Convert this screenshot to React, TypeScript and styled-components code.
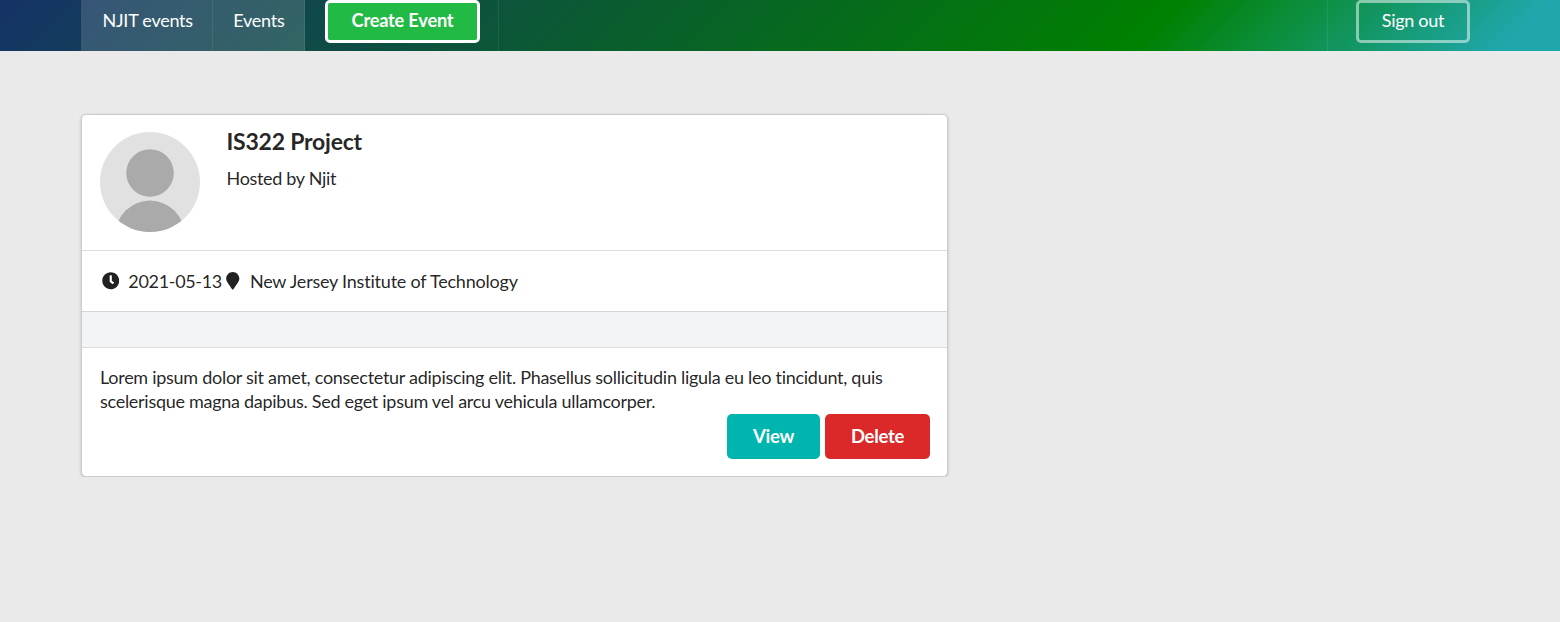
import React from "react";
import styled, { createGlobalStyle, css } from "styled-components";
import { FaClock, FaMapMarker } from "react-icons/fa";

const GlobalStyle = createGlobalStyle`
  *, *::before, *::after { box-sizing: border-box; }
  body {
    margin: 0;
    background: #eaeaea;
    color: rgba(0, 0, 0, 0.87);
    font-family: Lato, "Liberation Sans", sans-serif;
    font-size: 18px;
    font-variant-ligatures: none;
    line-height: 24px;
  }
`;

const NavBar = styled.nav`
  display: flex;
  height: 51px;
  padding: 0 70px 0 81px;
  background: linear-gradient(
    135deg,
    rgb(24, 42, 115) -98px,
    rgb(0, 128, 0) 834px,
    rgb(32, 167, 172) 1098px
  );
`;

const NavLink = styled.a<{ $width: number; $indent: number }>`
  width: ${(p) => p.$width}px;
  padding: 8px 0 0 ${(p) => p.$indent}px;
  border-right: 1px solid rgba(255, 255, 255, 0.08);
  background: rgba(255, 255, 255, 0.15);
  color: #fff;
  letter-spacing: -0.25px;
  text-decoration: none;
  white-space: nowrap;
`;

const NavSlot = styled.div<{ $end?: boolean }>`
  display: flex;
  align-items: flex-start;
  ${(p) =>
    p.$end
      ? css`
          margin-left: auto;
          padding: 0 20px 0 28px;
          border-left: 1px solid rgba(255, 255, 255, 0.08);
        `
      : css`
          width: 194px;
          padding-left: 20px;
          border-right: 1px solid rgba(255, 255, 255, 0.08);
        `}
`;

const NavButton = styled.button<{ $filled?: boolean; $width: number }>`
  width: ${(p) => p.$width}px;
  height: 43px;
  padding: 0 0 4px;
  border: 3px solid ${(p) => (p.$filled ? "#fff" : "rgba(255, 255, 255, 0.5)")};
  border-radius: 5px;
  background: ${(p) => (p.$filled ? "#21ba45" : "transparent")};
  background-clip: padding-box;
  color: #fff;
  font: ${(p) => (p.$filled ? "700 18.2px" : "400 18px")} Lato, sans-serif;
  letter-spacing: ${(p) => (p.$filled ? -0.2 : -0.3)}px;
  white-space: nowrap;
`;

const Page = styled.main`
  padding: 63px 0 0 81px;
`;

const Card = styled.article`
  width: 867px;
  border: 1px solid #cbcccd;
  border-radius: 5px;
  background: #fff;
  box-shadow: 0 1px 3px rgba(34, 36, 38, 0.22);
  overflow: hidden;
`;

const Header = styled.header`
  display: flex;
  gap: 26.5px;
  height: 136px;
  padding: 17px 18px 0;
  border-bottom: 1px solid #dcdddd;
`;

const Avatar = styled.svg`
  width: 100px;
  height: 100px;
  border-radius: 50%;
`;

const Title = styled.h2`
  margin: -4px 0 11px;
  font-size: 23px;
  font-weight: 700;
  letter-spacing: -0.22px;
  line-height: 27px;
`;

const Host = styled.p`
  margin: 0;
  letter-spacing: -0.32px;
`;

const Details = styled.section`
  display: flex;
  align-items: center;
  height: 61px;
  padding: 0 18px 1px;
  border-bottom: 1px solid #d4d5d6;
`;

const Detail = styled.span<{ $gap: number; $tracking: number }>`
  display: flex;
  align-items: center;
  gap: ${(p) => p.$gap}px;
  padding-left: 1.6px;
  letter-spacing: ${(p) => p.$tracking}px;
  svg {
    width: auto;
    height: 17.5px;
    margin-top: 1px;
  }
`;

const Attendees = styled.section`
  height: 36px;
  border-bottom: 1px solid #dcdddd;
  background: #f3f4f5;
`;

const Body = styled.section`
  display: flex;
  flex-direction: column;
  height: 128px;
  padding: 17px 17px 0 18px;
`;

const Description = styled.p`
  margin: 0 0 1px;
  letter-spacing: -0.28px;
`;

const Actions = styled.div`
  display: flex;
  justify-content: flex-end;
  gap: 5px;
`;

const ActionButton = styled.button<{ $color: string; $width: number }>`
  width: ${(p) => p.$width}px;
  height: 45px;
  padding: 0 0 2px;
  border: 0;
  border-radius: 5px;
  background: ${(p) => p.$color};
  color: #fff;
  font: 700 18.5px Lato, sans-serif;
  letter-spacing: -0.3px;
`;

export default function App() {
  return (
    <>
      <GlobalStyle />
      <NavBar>
        <NavLink $width={132} $indent={21.5}>NJIT events</NavLink>
        <NavLink $width={92} $indent={20.3}>Events</NavLink>
        <NavSlot>
          <NavButton $filled $width={155}>Create Event</NavButton>
        </NavSlot>
        <NavSlot $end>
          <NavButton $width={114}>Sign out</NavButton>
        </NavSlot>
      </NavBar>
      <Page>
        <Card>
          <Header>
            <Avatar viewBox="0 0 100 100">
              <rect width="100" height="100" fill="#e1e1e1" />
              <circle cx="50" cy="41" r="23.8" fill="#aaa" />
              <circle cx="50" cy="103" r="34.5" fill="#aaa" />
            </Avatar>
            <div>
              <Title>IS322 Project</Title>
              <Host>Hosted by Njit</Host>
            </div>
          </Header>
          <Details>
            <Detail $gap={9.2} $tracking={-0.32}>
              <FaClock />
              2021-05-13
            </Detail>
            <Detail $gap={8.8} $tracking={-0.21}>
              <FaMapMarker />
              New Jersey Institute of Technology
            </Detail>
          </Details>
          <Attendees />
          <Body>
            <Description>
              Lorem ipsum dolor sit amet, consectetur adipiscing elit. Phasellus sollicitudin ligula eu leo tincidunt, quis
              scelerisque magna dapibus. Sed eget ipsum vel arcu vehicula ullamcorper.
            </Description>
            <Actions>
              <ActionButton $color="#00b5ad" $width={93}>View</ActionButton>
              <ActionButton $color="#db2828" $width={105}>Delete</ActionButton>
            </Actions>
          </Body>
        </Card>
      </Page>
    </>
  );
}
